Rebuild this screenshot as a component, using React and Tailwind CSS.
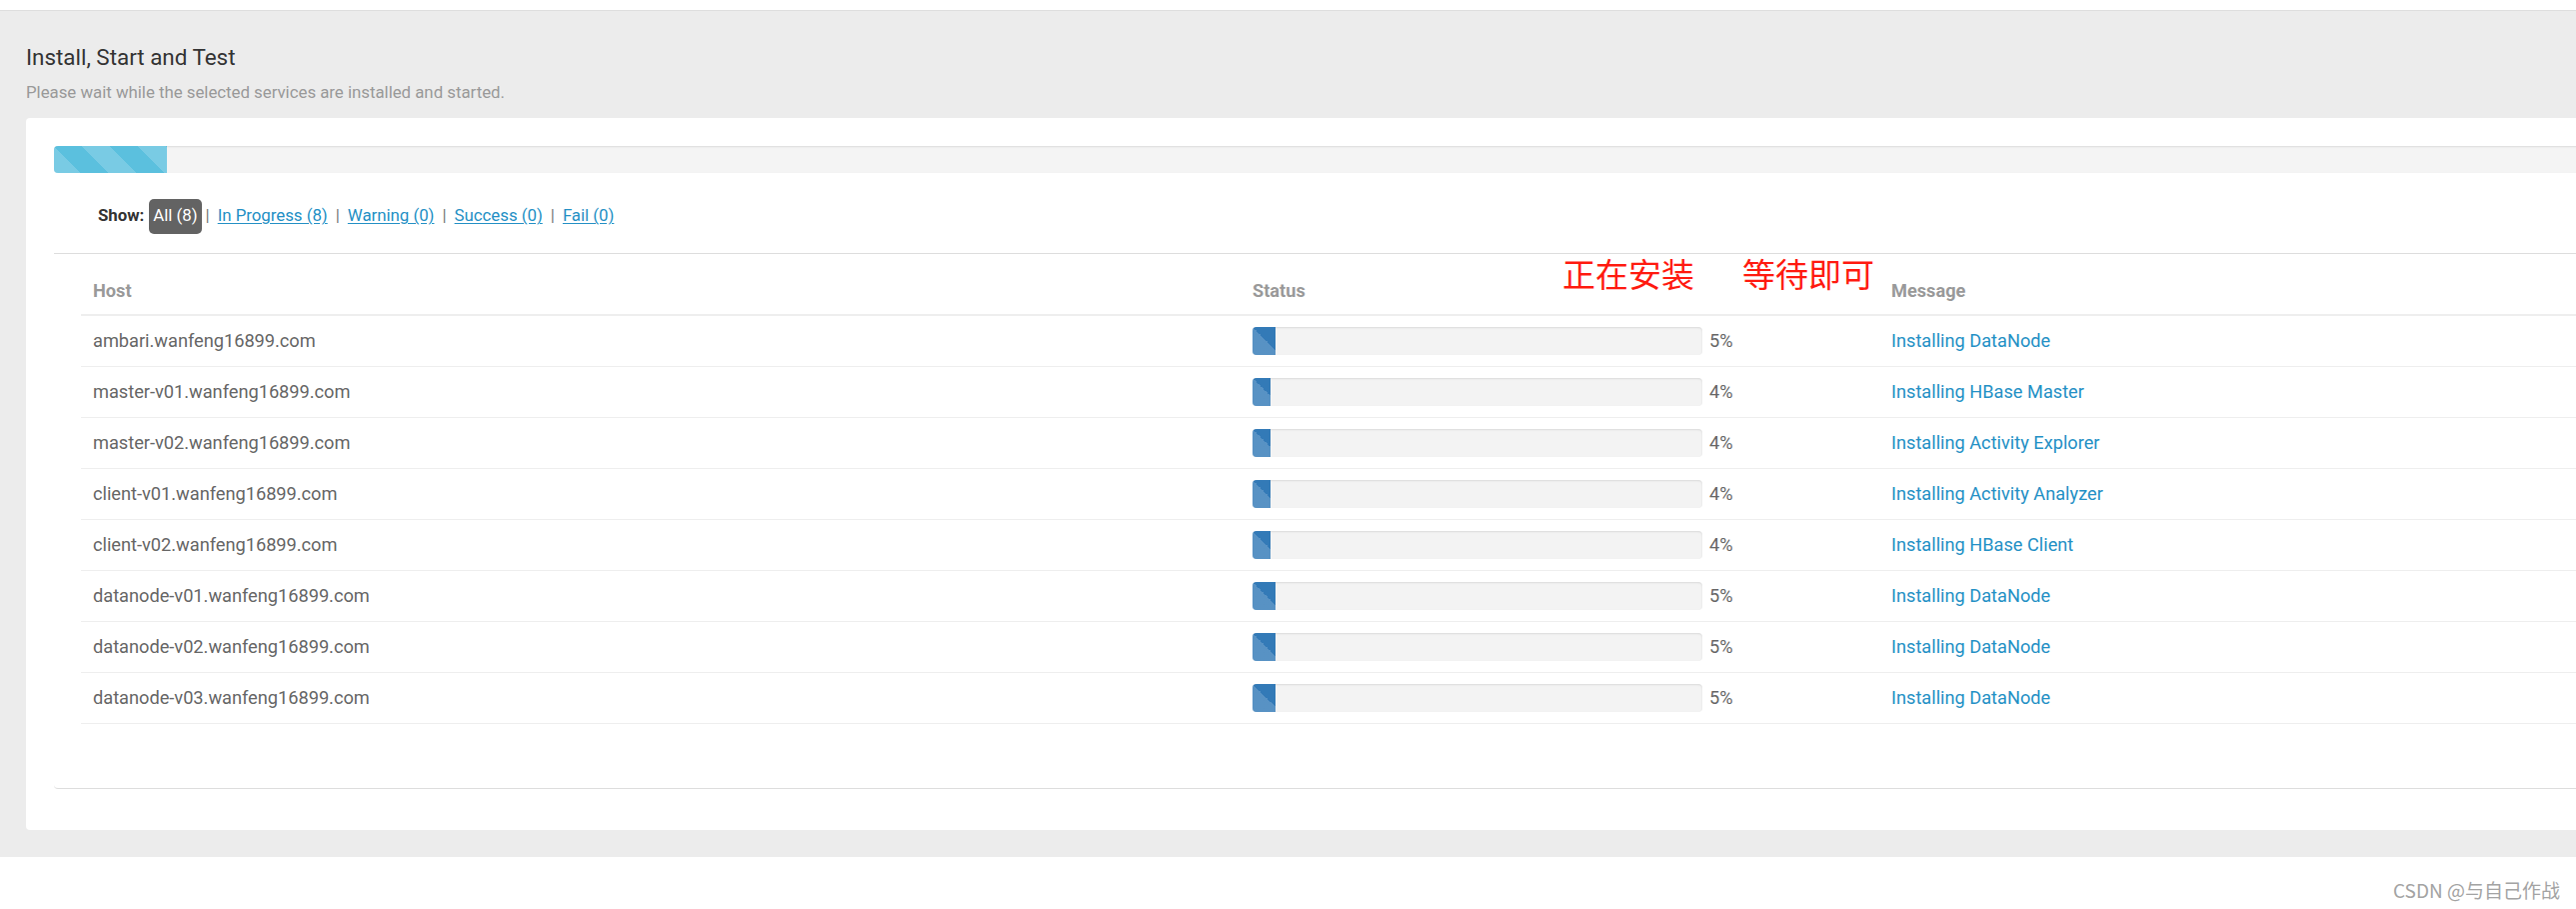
import React from 'react';

const hosts = [
  { host: 'ambari.wanfeng16899.com', pct: 5, msg: 'Installing DataNode' },
  { host: 'master-v01.wanfeng16899.com', pct: 4, msg: 'Installing HBase Master' },
  { host: 'master-v02.wanfeng16899.com', pct: 4, msg: 'Installing Activity Explorer' },
  { host: 'client-v01.wanfeng16899.com', pct: 4, msg: 'Installing Activity Analyzer' },
  { host: 'client-v02.wanfeng16899.com', pct: 4, msg: 'Installing HBase Client' },
  { host: 'datanode-v01.wanfeng16899.com', pct: 5, msg: 'Installing DataNode' },
  { host: 'datanode-v02.wanfeng16899.com', pct: 5, msg: 'Installing DataNode' },
  { host: 'datanode-v03.wanfeng16899.com', pct: 5, msg: 'Installing DataNode' },
];

const filters = ['In Progress (8)', 'Warning (0)', 'Success (0)', 'Fail (0)'];

const stripes =
  'bg-[linear-gradient(45deg,transparent_25%,rgba(255,255,255,.18)_25%,rgba(255,255,255,.18)_50%,transparent_50%,transparent_75%,rgba(255,255,255,.18)_75%)] bg-[length:56px_56px]';

function HostRow({ row }) {
  return (
    <div className="flex h-[51px] items-center border-b border-[#eeeeee] text-[18.2px]">
      <div className="w-[1160px] shrink-0 pl-[12px] text-[#666666]">{row.host}</div>
      <div className="flex w-[639px] shrink-0 items-center pl-[12px]">
        <div className="h-[28px] w-[450px] overflow-hidden rounded-[4px] bg-[#f3f3f3] shadow-[inset_0_1px_2px_rgba(0,0,0,0.1)]">
          <div
            className={`h-full bg-[#337ab7] ${stripes}`}
            style={{ width: `${(row.pct / 100) * 450}px` }}
          />
        </div>
        <span className="ml-[7px] text-[#666666]">{row.pct}%</span>
      </div>
      <div className="shrink-0 pl-[12px] text-[#2490c5]">{row.msg}</div>
    </div>
  );
}

export default function App() {
  return (
    <div className="relative h-[909px] w-[2577px] overflow-hidden bg-white font-['Roboto',sans-serif]">
      <div className="h-[11px] border-b border-[#dedede] bg-white" />
      <div className="h-[846px] bg-[#ececec] pl-[26px] pt-[33px]">
        <h2 className="text-[22.4px] leading-[26px] text-[#333333]">Install, Start and Test</h2>
        <p className="mt-[12px] text-[16.8px] leading-[20px] text-[#999999]">
          Please wait while the selected services are installed and started.
        </p>
        <div className="mt-[16px] w-[2640px] rounded-[4px] bg-white pb-[41px] pl-[28px] pt-[28px]">
          <div className="h-[27px] overflow-hidden rounded-[4px] bg-[#f4f4f4] shadow-[inset_0_1px_2px_rgba(0,0,0,0.1)]">
            <div className={`h-full w-[113px] bg-[#5bc0de] ${stripes}`} />
          </div>

          <div className="mt-[25px] flex h-[35px] items-center pl-[44px] pt-[1px] text-[16.8px]">
            <span className="mr-[5px] font-bold text-[#333333]">Show:</span>
            <span className="flex h-[35px] items-center rounded-[5px] bg-[#636363] px-[4px] text-white">
              All (8)
            </span>
            {filters.map((f, i) => (
              <React.Fragment key={f}>
                <span className={`${i === 0 ? 'ml-[4px]' : 'ml-[8px]'} mr-[8px] text-[#777777]`}>|</span>
                <a href="#" className="text-[#2490c5] underline underline-offset-2">
                  {f}
                </a>
              </React.Fragment>
            ))}
          </div>

          <div className="mt-[20px] rounded-bl-[4px] border-b border-t border-[#dddddd] pb-[64px] pl-[27px] pt-[9px]">
            <div className="flex h-[53px] items-center border-b-2 border-[#eeeeee] pt-[5px] text-[18.2px] font-bold text-[#999999]">
              <div className="w-[1160px] shrink-0 pl-[12px]">Host</div>
              <div className="w-[639px] shrink-0 pl-[12px]">Status</div>
              <div className="shrink-0 pl-[12px]">Message</div>
            </div>
            {hosts.map((row) => (
              <HostRow key={row.host} row={row} />
            ))}
          </div>
        </div>
      </div>
      <div className="flex justify-end pr-[16px] pt-[23px] font-['Noto_Sans_CJK_SC',sans-serif] text-[19px] leading-[20px] text-[#a3a3a3]">
        CSDN @与自己作战
      </div>

      <div className="absolute left-[1563px] top-[257px] flex font-['Noto_Sans_CJK_SC',sans-serif] text-[33px] leading-none text-[#ff1a0f]">
        <span>正在安装</span>
        <span className="ml-[48px]">等待即可</span>
      </div>
    </div>
  );
}
